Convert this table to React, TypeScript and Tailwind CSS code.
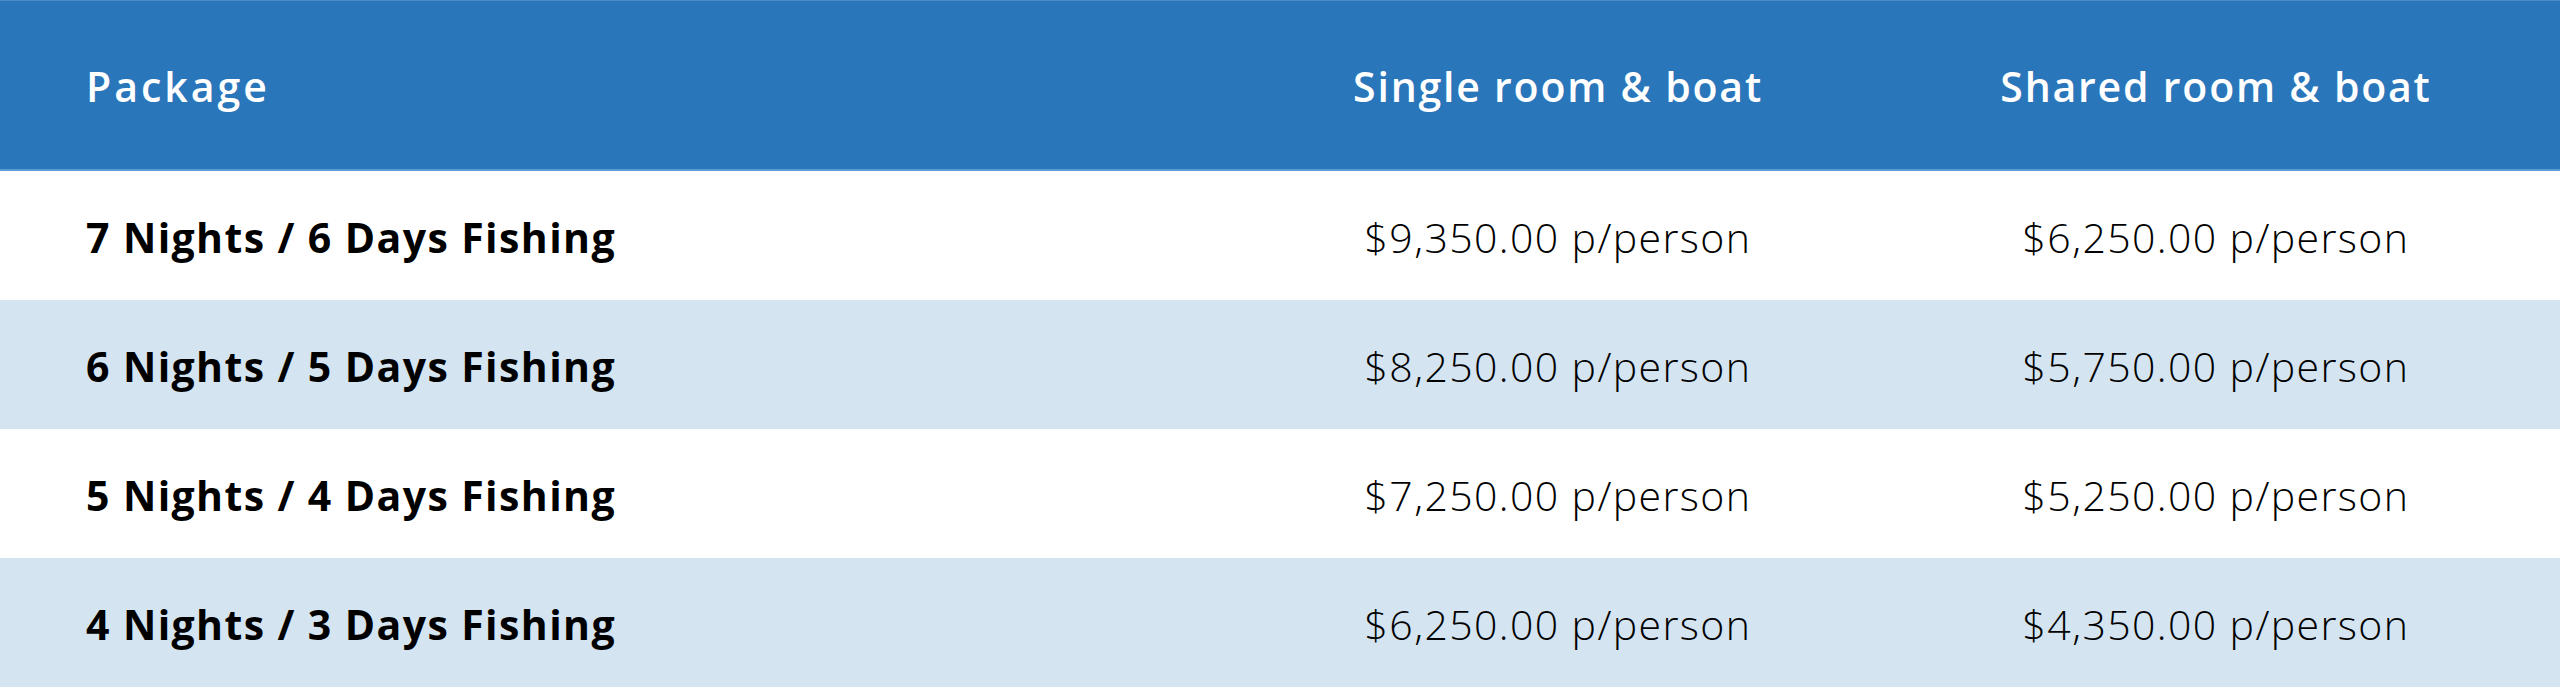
import React from "react";

const rows = [
  { pkg: "7 Nights / 6 Days Fishing", single: "$9,350.00 p/person", shared: "$6,250.00 p/person" },
  { pkg: "6 Nights / 5 Days Fishing", single: "$8,250.00 p/person", shared: "$5,750.00 p/person" },
  { pkg: "5 Nights / 4 Days Fishing", single: "$7,250.00 p/person", shared: "$5,250.00 p/person" },
  { pkg: "4 Nights / 3 Days Fishing", single: "$6,250.00 p/person", shared: "$4,350.00 p/person" },
];

export default function App() {
  return (
    <div className="w-[2560px] h-[687px] bg-white font-['Open_Sans',sans-serif]">
      <div className="grid grid-cols-[1244px_628px_688px] h-[171px] pt-[3px] bg-[#2a76bb] border-t border-t-[#4a8cca] border-b-2 border-b-[#5c9bd3] items-center text-white font-semibold text-[41px]">
        <div className="pl-[86px] tracking-[3px]">Package</div>
        <div className="text-center tracking-[1.8px]">Single room &amp; boat</div>
        <div className="text-center tracking-[1.8px]">Shared room &amp; boat</div>
      </div>
      {rows.map((r, i) => (
        <div
          key={i}
          className={
            "grid grid-cols-[1244px_628px_688px] h-[129px] pt-[5px] items-center text-black text-[41px] tracking-[1.4px] " +
            (i % 2 === 1 ? "bg-[#d4e4f1]" : "bg-white")
          }
        >
          <div className="pl-[86px] font-bold">{r.pkg}</div>
          <div className="text-center font-light">{r.single}</div>
          <div className="text-center font-light">{r.shared}</div>
        </div>
      ))}
    </div>
  );
}
